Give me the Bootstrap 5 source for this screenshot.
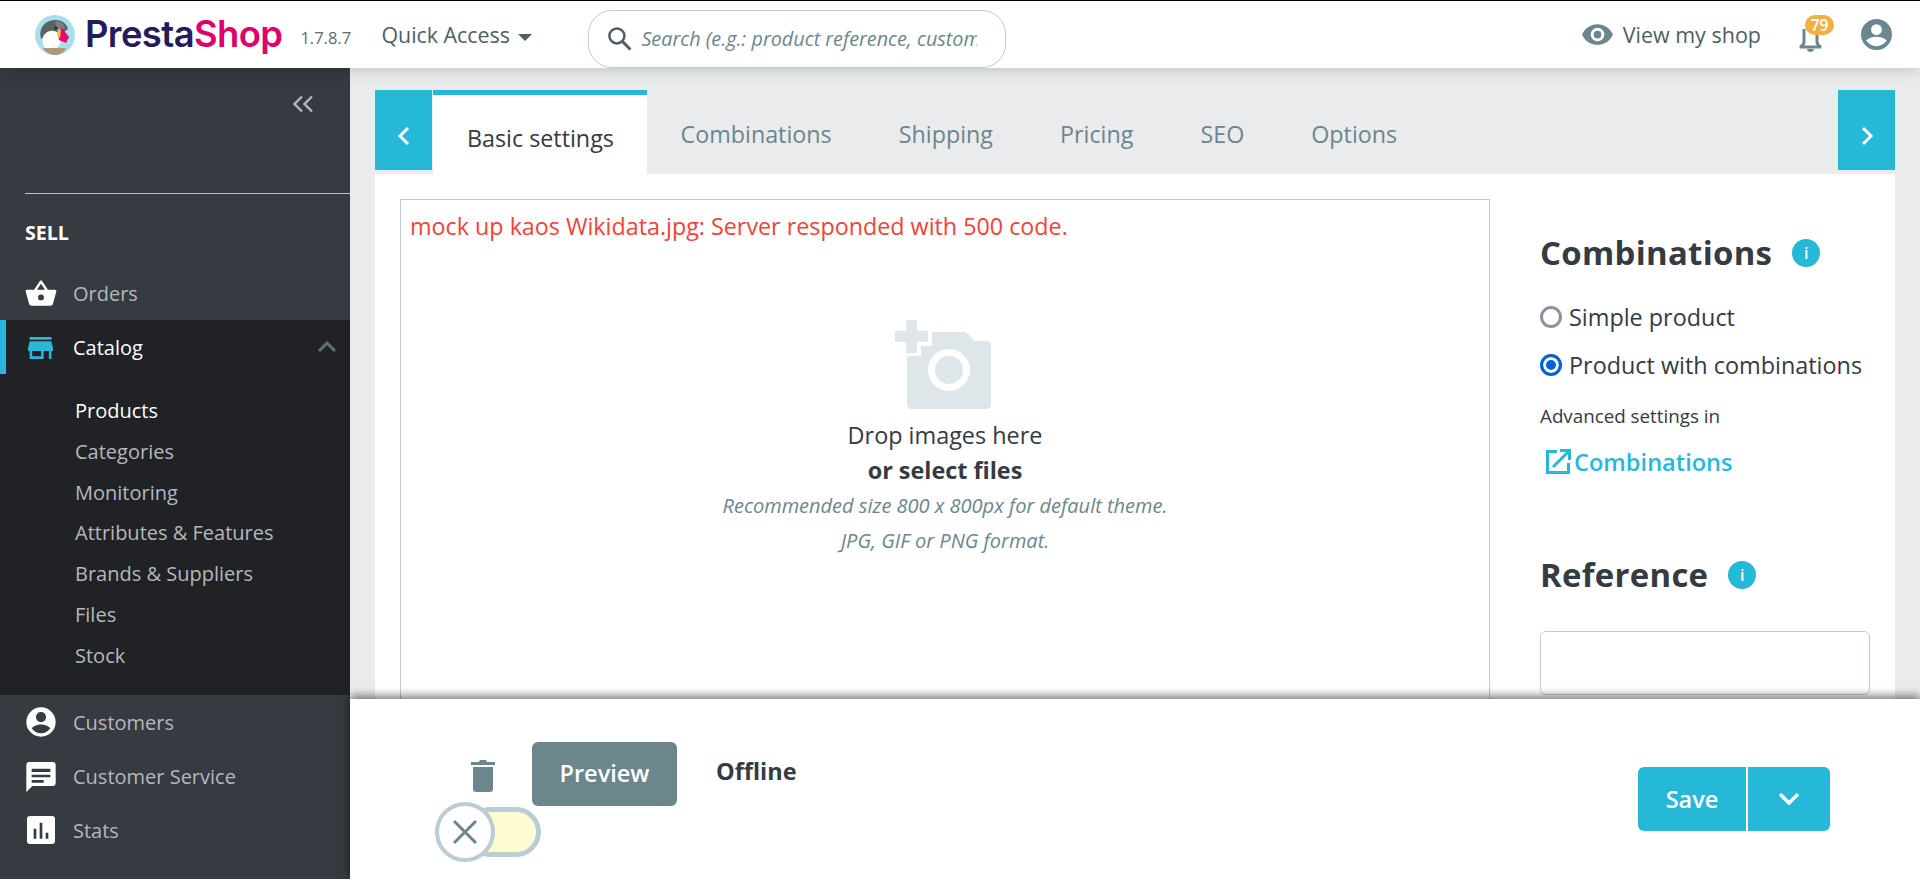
<!DOCTYPE html>
<html lang="en">
<head>
<meta charset="utf-8">
<title>PrestaShop</title>
<link rel="stylesheet" href="https://cdn.jsdelivr.net/npm/bootstrap@5.3.0/dist/css/bootstrap.min.css">
<style>
html,body{height:879px;overflow:hidden}
body{font-family:"Open Sans",sans-serif;color:#363a41;background:#eaebec;font-size:20px}
.ps-top{height:68px;border-top:1px solid #000;background:#fff;box-shadow:0 0 16px rgba(0,0,0,.22);position:relative;z-index:3;padding-left:35px;padding-right:28px}
.ps-logotext{font-family:Inter,sans-serif;font-weight:600;font-size:36.4px;letter-spacing:-.6px;color:#251b5b;margin-left:10px;line-height:1}
.ps-logotext span{color:#df0067}
.ps-ver{font-size:16.5px;color:#5c6b70;margin-left:18px;margin-top:8px;width:81px}
.ps-quick{color:#4f5e63;font-size:21.4px;width:207px;padding-top:1px}
.ps-caret{display:inline-block;border:7px solid transparent;border-top-color:#4f5e63;border-bottom:0;margin-left:8px;vertical-align:middle}
.ps-search{width:418px;height:58px;margin-top:8px;border:1px solid #bbcdd2;border-radius:24px;padding:0 28px 0 18px}
.ps-search span{font-style:italic;color:#6c868e;font-size:19.8px;white-space:nowrap;overflow:hidden;margin-left:9px}
.ps-view{color:#4f5e63;font-size:21.5px;margin-right:37px;padding-top:1px}
.ps-bell{width:25px;height:30px;margin-right:38px;margin-top:7px}
.ps-num{top:-8px;left:7px;width:29px;height:20px;border-radius:10px;background:#f0b143;color:#fff;font-size:15.5px;line-height:20px;text-align:center;font-weight:600}
.ps-body{height:811px}
.ps-side{width:350px;background:#363a41;flex:none}
.ps-collapse{height:126px;padding:19px 36px 0 0;border-bottom:1px solid #bbc1c6;margin-left:25px;text-align:right}
.ps-sell{color:#fff;font-weight:700;font-size:19.6px;padding:25px 0 0 25px;height:72px;line-height:28px}
.ps-item{height:54px;padding-left:25px;color:#b4b8bd;font-size:20px}
.ps-item span{padding-top:1px}
.ps-item svg{width:32px;height:32px;margin-right:16px;flex:none}
.ps-item.ps-active{background:#202226;color:#fff;border-left:6px solid #25b9d7;padding-left:19px;position:relative}
.ps-sub{background:#202226;padding:17px 0 10px 75px;height:321px}
.ps-sub div{height:40.8px;line-height:40.8px;color:#b4b8bd;font-size:20px}
.ps-sub div.ps-on{color:#fff}
.ps-main{min-width:0}
.ps-scroll{padding:22px 25px 0;overflow:hidden}
.ps-tabs{height:84px;position:relative}
.ps-arrow{width:57px;height:80px;background:#25b9d7;flex:none;align-self:flex-start;padding-top:12px}
.ps-tab{font-size:23.3px;color:#6c868e;padding:29px 33.5px 0;line-height:30px;white-space:nowrap}
.ps-tab.ps-cur{background:#fff;border-top:5px solid #25b9d7;color:#363a41;padding:28px 0 0 34px;width:214px;margin-left:1px;height:84px}
.ps-panel{background:#fff;height:525px;padding:25px 0 0 25px;overflow:hidden}
.ps-drop{width:1090px;height:520px;border:1px solid #bbcdd2;flex:none;padding:0 9px}
.ps-err{color:#f44336;font-size:23.3px;padding-top:13px;line-height:27px;white-space:nowrap}
.ps-camera{width:100px;height:90px;margin:79px 0 0 484px;display:block}
.ps-droptxt{text-align:center;line-height:35px;margin-top:9px;color:#363a41;font-size:23.4px}
.ps-hint{font-style:italic;color:#6c868e;font-size:20px;line-height:35px;display:block;font-weight:400}
.ps-right{padding:34px 25px 0 50px;width:355px;flex:none}
.ps-h2{font-size:32.9px;font-weight:700;line-height:40px;margin:0;letter-spacing:.3px}
.ps-info{width:28px;height:28px;border-radius:50%;background:#25b9d7;color:#fff;font-size:16px;line-height:28px;text-align:center;font-weight:600;margin-left:20px;flex:none}
.ps-radio{font-size:23.4px;line-height:30px;margin-bottom:18px;white-space:nowrap}
.ps-radio1{margin-top:29px}
.ps-radio i{width:22px;height:22px;border-radius:50%;border:3px solid #8f8f9d;display:inline-block;margin-right:7px;flex:none}
.ps-radio i.ps-chk{border:3px solid #0060df;box-shadow:inset 0 0 0 3px #fff;background:#0060df}
.ps-adv{font-size:18.8px;line-height:28px;padding-top:4px}
.ps-link{color:#25b9d7;font-size:23.6px;font-weight:600;line-height:30px;margin-top:17px;padding-left:5px}
.ps-link svg{margin-right:3px}
.ps-refhead{margin-top:78px}
.ps-ref{height:64px;width:330px;border:1px solid #bbcdd2;border-radius:6px;margin-top:36px}
.ps-foot{height:180px;background:#fff;flex:none;position:relative;box-shadow:0 -3px 9px rgba(0,0,0,.55);padding:43px 90px 0 85px;z-index:2}
.ps-trash{width:24px;height:32px;margin:18px 37px 0 36px}
.ps-preview{width:145px;height:64px;background:#6c868e;color:#fff;font-weight:600;font-size:23.5px;border:0;border-radius:6px;padding:0}
.ps-off{font-weight:700;font-size:23.5px;margin:15px 0 0 39px;line-height:28px}
.ps-switch{width:106px;height:60px;margin-top:-4px;position:relative}
.ps-track{left:0;right:0;top:5px;height:50px;border:5px solid #bbcdd2;background:#fffbd3;border-radius:25px;margin-left:30px}
.ps-knob{left:0;top:0;width:60px;height:60px;border-radius:50%;background:#fff;border:4px solid #bbcdd2}
.ps-save{margin-top:25px;height:64px;background:#25b9d7;border-radius:6px;color:#fff}
.ps-savel{width:110px;text-align:center;font-weight:600;font-size:23.5px;line-height:64px;border-right:2px solid #fff}
.ps-saver{width:82px}
</style>
</head>
<body>
<header class="ps-top d-flex align-items-center">
  <svg width="40" height="40" viewBox="0 0 40 40" style="flex:none" aria-hidden="true">
    <circle cx="20" cy="20" r="20" fill="#a9dfec"/>
    <path d="M6 24C3 12 11 5 21 5c6 0 11 4 12 9l-7 5-8-2-7 4z" fill="#5d6165"/>
    <path d="M20 6c5 0 9 3 10 7l-5 4-3-1z" fill="#7b8084"/>
    <path d="M8 22c3-7 11-8 15-4 2 2 3 7 2 11l-4 5H11c-3-3-4-8-3-12z" fill="#fff"/>
    <path d="M27 13l7 9-3 6-7-3-1-7z" fill="#e5086d"/>
    <path d="M23 14l3 1-1 8-3-2z" fill="#f2c24a"/>
    <path d="M8 33h23c-2 5-7 7-11 7s-9-2-12-7z" fill="#b3977a"/>
    <circle cx="21" cy="13" r="1.6" fill="#222"/>
  </svg>
  <div class="ps-logotext">Presta<span>Shop</span></div>
  <div class="ps-ver">1.7.8.7</div>
  <div class="ps-quick">Quick Access<span class="ps-caret"></span></div>
  <div class="ps-search d-flex align-items-center">
    <svg width="25" height="25" viewBox="0 0 24 24" style="flex:none" aria-hidden="true"><circle cx="9.5" cy="9.5" r="7.2" fill="none" stroke="#4f5e63" stroke-width="2.4"/><path d="M15 15l7.5 7.5" stroke="#4f5e63" stroke-width="2.8"/></svg>
    <span>Search (e.g.: product reference, custom</span>
  </div>
  <div class="ms-auto d-flex align-items-center">
    <svg width="31" height="21" viewBox="0 0 24 16" aria-hidden="true" style="margin-right:10px"><path fill="#6c868e" d="M12 0C6.500 0 2 3.300 0 8c2 4.700 6.500 8 12 8s10-3.300 12-8c-2-4.700-6.500-8-12-8zm0 13.300A5.300 5.300 0 1 1 12 2.700a5.300 5.300 0 0 1 0 10.600zM12 5a3 3 0 1 0 0 6 3 3 0 0 0 0-6z"/></svg>
    <div class="ps-view">View my shop</div>
    <div class="ps-bell position-relative">
      <svg width="25" height="26" viewBox="0 0 25 26" aria-hidden="true"><path fill="none" stroke="#6c868e" stroke-width="3" d="M6 2v13c0 3-2 4-4 5h21c-2-1-4-2-4-5V2"/><path fill="#6c868e" d="M9 22h7c0 2-2 3-3.500 3S9 24 9 22z"/></svg>
      <div class="ps-num position-absolute">79</div>
    </div>
    <svg width="31" height="31" viewBox="0 0 24 24" aria-hidden="true"><path fill="#6c868e" d="M12 0a12 12 0 1 0 0 24 12 12 0 0 0 0-24zm0 4a4.200 4.200 0 1 1 0 8.400A4.200 4.200 0 0 1 12 4zm0 17c-3.300 0-6.200-1.700-8-4.300 1.500-2 5.300-3 8-3s6.500 1 8 3c-1.800 2.600-4.700 4.300-8 4.300z"/></svg>
  </div>
</header>
<div class="ps-body d-flex">
  <aside class="ps-side">
    <div class="ps-collapse"><svg width="22" height="18" viewBox="0 0 22 18" aria-hidden="true"><path fill="none" stroke="#b4b8bd" stroke-width="2.400" d="M10 1.500L2.500 9l7.500 7.500M20 1.500L12.500 9l7.500 7.500"/></svg></div>
    <div class="ps-sell">SELL</div>
    <div class="ps-item d-flex align-items-center">
      <svg viewBox="0 0 24 24" aria-hidden="true"><path fill="#fff" d="M17.200 9.500L12.800 3c-.400-.500-1.200-.500-1.600 0L6.800 9.500H1.500c-.800 0-1.300.600-1 1.400l2.600 9.300c.200.800 1 1.300 1.900 1.300h14c.900 0 1.700-.500 1.900-1.300l2.600-9.300c.300-.800-.200-1.400-1-1.400zM9 9.500l3-4.400 3 4.400zm3 8a2.200 2.200 0 1 1 0-4.400 2.200 2.200 0 0 1 0 4.400z"/></svg>
      <span>Orders</span>
    </div>
    <div class="ps-item ps-active d-flex align-items-center">
      <svg viewBox="0 0 24 24" aria-hidden="true"><g transform="translate(2.300 3) scale(.78)"><path fill="#25b9d7" fill-rule="evenodd" d="M1.500 2h21v2.500h-21zM1.500 6h21L24 13v2.500h-1.500V23H20v-7.500h-5V23H1.500v-7.500H0V13zM4 15.500V20.500h8.500v-5z"/></g></svg>
      <span>Catalog</span>
      <svg class="position-absolute" style="right:8px;top:12px;width:30px;height:30px;margin:0" viewBox="0 0 30 30" aria-hidden="true"><path fill="none" stroke="#5b7279" stroke-width="3" d="M7 19l8-8 8 8"/></svg>
    </div>
    <div class="ps-sub">
      <div class="ps-on">Products</div>
      <div>Categories</div>
      <div>Monitoring</div>
      <div>Attributes &amp; Features</div>
      <div>Brands &amp; Suppliers</div>
      <div>Files</div>
      <div>Stock</div>
    </div>
    <div class="ps-item d-flex align-items-center">
      <svg viewBox="0 0 24 24" aria-hidden="true"><path fill="#fff" d="M12 1a11 11 0 1 0 0 22 11 11 0 0 0 0-22zm0 3.500a3.800 3.800 0 1 1 0 7.600 3.800 3.800 0 0 1 0-7.600zm0 16c-2.900 0-5.500-1.500-7-3.800 1.300-1.800 4.700-2.800 7-2.800s5.700 1 7 2.800c-1.500 2.300-4.100 3.800-7 3.800z"/></svg>
      <span>Customers</span>
    </div>
    <div class="ps-item d-flex align-items-center">
      <svg viewBox="0 0 24 24" aria-hidden="true"><path fill="#fff" d="M3 1.500h18c1.100 0 2 .900 2 2v14c0 1.100-.900 2-2 2H5.500L1 24V3.500c0-1.100.900-2 2-2zM5 9h14V6.500H5zm0 4h14v-2H5zm0 4h9v-2H5z" fill-rule="evenodd"/></svg>
      <span>Customer Service</span>
    </div>
    <div class="ps-item d-flex align-items-center">
      <svg viewBox="0 0 24 24" aria-hidden="true"><path fill="#fff" fill-rule="evenodd" d="M3.500 1.500h17c1.100 0 2 .900 2 2v17c0 1.100-.900 2-2 2h-17c-1.100 0-2-.900-2-2v-17c0-1.100.900-2 2-2zM6.500 11v7.500h2V11zm4.500-4.500v12h2v-12zm4.500 7.500v4.500h2V14z"/></svg>
      <span>Stats</span>
    </div>
  </aside>
  <main class="ps-main flex-grow-1 d-flex flex-column">
    <div class="ps-scroll flex-grow-1">
      <div class="ps-tabs d-flex">
        <div class="ps-arrow d-flex align-items-center justify-content-center"><svg width="14" height="20" viewBox="0 0 14 20" aria-hidden="true"><path fill="none" stroke="#fff" stroke-width="3" d="M11 2L3 10l8 8"/></svg></div>
        <div class="ps-tab ps-cur">Basic settings</div>
        <div class="ps-tab">Combinations</div>
        <div class="ps-tab">Shipping</div>
        <div class="ps-tab">Pricing</div>
        <div class="ps-tab">SEO</div>
        <div class="ps-tab">Options</div>
        <div class="ps-arrow ms-auto d-flex align-items-center justify-content-center"><svg width="14" height="20" viewBox="0 0 14 20" aria-hidden="true"><path fill="none" stroke="#fff" stroke-width="3" d="M3 2l8 8-8 8"/></svg></div>
      </div>
      <div class="ps-panel d-flex">
        <div class="ps-drop">
          <div class="ps-err">mock up kaos Wikidata.jpg: Server responded with 500 code.</div>
          <svg class="ps-camera" viewBox="0 0 100 90" aria-hidden="true"><path fill="#dfe6e9" d="M12 1h11v11h11v11H23v11H12V23H1V12h11z"/><path fill="#dfe6e9" fill-rule="evenodd" d="M38 13h34l9 9h11c3 0 5 2 5 5v58c0 3-2 5-5 5H18c-3 0-5-2-5-5V37h14V27h11zM55 30a21 21 0 1 0 0 42 21 21 0 0 0 0-42zm0 7a14 14 0 1 1 0 28 14 14 0 0 1 0-28z"/></svg>
          <div class="ps-droptxt">
            <div>Drop images here</div>
            <div class="fw-bold">or select files</div>
            <span class="ps-hint">Recommended size 800 x 800px for default theme.</span>
            <span class="ps-hint">JPG, GIF or PNG format.</span>
          </div>
        </div>
        <div class="ps-right">
          <div class="d-flex align-items-center"><h2 class="ps-h2">Combinations</h2><span class="ps-info">i</span></div>
          <div class="ps-radio ps-radio1 d-flex align-items-center"><i></i>Simple product</div>
          <div class="ps-radio d-flex align-items-center"><i class="ps-chk"></i>Product with combinations</div>
          <div class="ps-adv">Advanced settings in</div>
          <div class="ps-link d-flex align-items-center">
            <svg width="26" height="26" viewBox="0 0 26 26" aria-hidden="true"><path fill="none" stroke="#25b9d7" stroke-width="3" d="M12 2.500H2.500v21h21V14M8 18L23 3M15 1.500h9.500V11"/></svg>Combinations
          </div>
          <div class="ps-refhead d-flex align-items-center"><h2 class="ps-h2">Reference</h2><span class="ps-info">i</span></div>
          <div class="ps-ref"></div>
        </div>
      </div>
    </div>
    <footer class="ps-foot d-flex justify-content-between align-items-start">
      <div>
        <div class="d-flex align-items-start">
          <svg class="ps-trash" viewBox="0 0 24 32" aria-hidden="true"><path fill="#6c868e" d="M9 0h6l1 2h8v3H0V2h8zM2 7h20v22c0 2-1 3-3 3H5c-2 0-3-1-3-3z"/></svg>
          <button class="ps-preview" type="button">Preview</button>
          <div class="ps-off">Offline</div>
        </div>
        <div class="ps-switch">
          <div class="ps-track position-absolute"></div>
          <div class="ps-knob position-absolute d-flex align-items-center justify-content-center">
            <svg width="26" height="26" viewBox="0 0 26 26" aria-hidden="true"><path stroke="#6c868e" stroke-width="3" d="M2 2l22 22M24 2L2 24"/></svg>
          </div>
        </div>
      </div>
      <div class="ps-save d-flex">
        <div class="ps-savel">Save</div>
        <div class="ps-saver d-flex align-items-center justify-content-center"><svg width="22" height="16" viewBox="0 0 22 16" aria-hidden="true"><path fill="none" stroke="#fff" stroke-width="3.500" d="M2 3l9 9 9-9"/></svg></div>
      </div>
    </footer>
  </main>
</div>
</body>
</html>
